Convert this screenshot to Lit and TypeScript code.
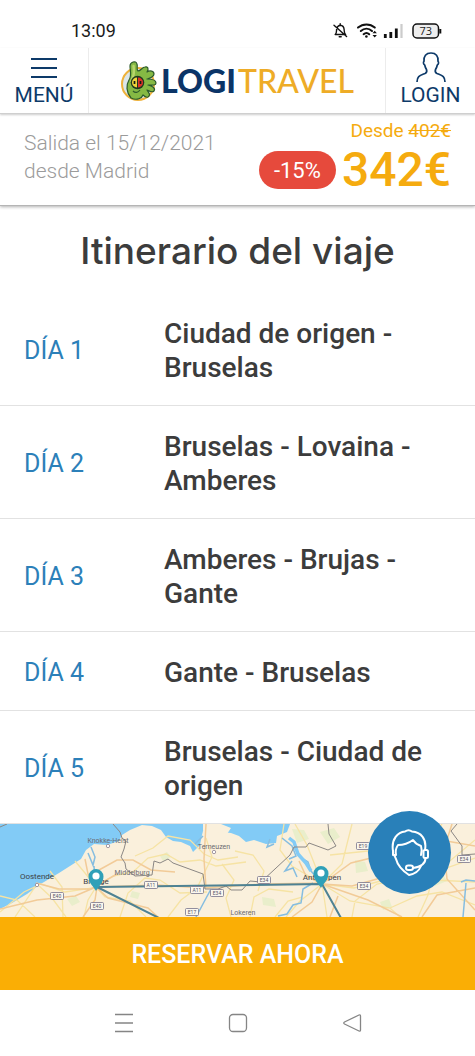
import { LitElement, html, css, svg } from "lit";
import { customElement, property } from "lit/decorators.js";

@customElement("status-bar")
class StatusBar extends LitElement {
  static styles = css`
    :host { display: flex; align-items: center; justify-content: space-between; height: 48px; padding: 13px 33px 0 71px; box-sizing: border-box; color: #1b1b1b; }
    .clock { font: 400 18px/22px Roboto, sans-serif; }
    svg { display: block; }
    .level { font: 400 11px "Open Sans", sans-serif; }
  `;
  render() {
    return html`
      <span class="clock">13:09</span>
      <svg width="110" height="20" viewBox="0 0 110 20" fill="none" stroke="#111" aria-label="Estado del dispositivo">
        <g stroke-width="1.4" stroke-linecap="round" stroke-linejoin="round">
          <path d="M3.200 13.500h10.400M3.200 13.500c1.600-1.400 1.200-3 1.400-5.200C5 6 6.200 4.600 8.200 4.300c2.400.2 3.700 1.900 3.900 4.100.2 2-.1 3.600 1.500 5.100M7.200 15.800h2M8.200 2.700v1.400M2 4.200l12.600 11.400" />
        </g>
        <g stroke-width="2" stroke-linecap="round">
          <path d="M26 6.600c5-4.300 12-4.300 16.800 0M28.800 10c3.400-3 8-3 11.200 0M31.600 13.200c1.700-1.500 4-1.500 5.600 0" />
        </g>
        <circle cx="34.400" cy="15.500" r="1.300" fill="#111" stroke="none" />
        <path d="M40.500 12.200l2.200-2.400 2.200 2.400zM40.500 14l2.200 2.400L44.900 14z" fill="#111" stroke="none" />
        <g stroke-width="2.800">
          <path d="M53.300 13v4M58.800 11v6M64.300 7.500v9.500" />
          <path d="M69.500 3v14" stroke="#ccc" stroke-width="2.200" />
        </g>
        <rect x="81" y="3" width="25.500" height="14" rx="4" fill="#eee" stroke-width="1.500" />
        <path d="M108.300 8v4.500" stroke-width="2" />
        <text class="level" x="93.700" y="14" text-anchor="middle" fill="#222" stroke="none">73</text>
      </svg>
    `;
  }
}

@customElement("site-header")
class SiteHeader extends LitElement {
  static styles = css`
    :host { display: grid; grid-template-columns: 89px 1fr 90px; height: 65px; position: relative; z-index: 2; background: #fff; border-bottom: 1px solid #cfcfcf; box-shadow: 0 1px 2px rgba(0, 0, 0, 0.2); color: #0d3a69; }
    .action { display: flex; flex-direction: column; align-items: center; justify-content: flex-end; gap: 4px; padding: 0 0 6px; margin: 0; border: 0 solid #ececec; background: none; color: inherit; font: 400 21px/24px Roboto, sans-serif; cursor: pointer; }
    .menu { border-right-width: 1px; }
    .login { border-left-width: 1px; gap: 0; }
    .brand { display: flex; align-items: center; justify-content: center; gap: 4px; text-decoration: none; padding-top: 1px; }
    .words { display: flex; gap: 2px; white-space: nowrap; }
    .logi { font: 900 32px/40px Lato, sans-serif; color: #0b3467; }
    .travel { font: 500 32px/40px Lato, sans-serif; color: #eeac27; }
    svg { display: block; flex: none; }
  `;
  render() {
    return html`
      <button class="action menu" type="button">
        <svg width="26" height="22" viewBox="0 0 26 22" stroke="#0d3a69" stroke-width="2"><path d="M0 2h26M0 11h26M0 20h26" /></svg>
        MENÚ
      </button>
      <a class="brand" href="#" aria-label="Logitravel">
        <svg width="37" height="42" viewBox="0 0 37 42">
          <circle cx="18" cy="24" r="16" fill="#dce6e8" stroke="#eeb23c" stroke-width="2" />
          <path d="M11 38C6 32 6 25 9 20C12 16 10 10 10 6C10 2 16 0 17 4C18 7 16 9 18 11C21 11 22 7 25 7C28 6 29 9 27 12C30 10 34 11 34 14C34 17 30 18 27 19C31 19 36 20 36 23C36 26 31 25 28 25C32 26 36 28 34 31C32 33 29 31 27 30C29 33 31 35 28 37C26 38 24 36 23 35C22 38 17 41 11 38z" fill="#85b944" stroke="#2c5a2b" stroke-width="1.200" stroke-linejoin="round" />
          <path d="M13.500 6c1 6 0 11-2 15" stroke="#b7d66b" stroke-width="2.500" fill="none" stroke-linecap="round" />
          <circle cx="17.500" cy="22.500" r="6.800" fill="#20391f" />
          <path d="M17 17.500a5 5 0 0 0 0 10z" fill="#f1d33a" />
          <path d="M18 17.500a5 5 0 0 1 0 10z" fill="#dd3429" />
          <path d="M14.500 21v3M20.500 21v3" stroke="#161c14" stroke-width="1.700" />
          <path d="M13 31c2 2 5 2 7-1" stroke="#2c5a2b" stroke-width="1.200" fill="none" />
        </svg>
        <span class="words"><span class="logi">LOGI</span><span class="travel">TRAVEL</span></span>
      </a>
      <button class="action login" type="button">
        <svg width="30" height="31" viewBox="0 0 30 31" fill="none" stroke="#0d3a69" stroke-width="1.700" stroke-linejoin="round">
          <path d="M1 30c0-6 3-6.500 8-8.500 2-.9 2-2.500 1.500-4C9.300 15.500 9 14.500 8.700 13c-1.400-.6-1.600-3-.7-3.600C7.500 4 10 1 15 1s7.500 3 7 8.400c.9.6.7 3-.7 3.600-.3 1.500-.6 2.500-1.800 4.500-.5 1.500-.5 3.100 1.500 4 5 2 8 2.500 8 8.500" />
        </svg>
        LOGIN
      </button>
    `;
  }
}

@customElement("price-bar")
class PriceBar extends LitElement {
  static styles = css`
    :host { display: flex; justify-content: space-between; position: relative; z-index: 1; height: 91px; box-sizing: content-box; padding: 0 24px; background: #fff; border-bottom: 1px solid #b5b5b5; box-shadow: 0 1px 3px rgba(0, 0, 0, 0.3); font-family: Roboto, sans-serif; }
    .trip { margin: 0; padding-top: 15px; font-size: 21px; line-height: 28px; font-weight: 300; color: #9b9b9b; }
    .price { display: flex; flex-direction: column; align-items: flex-end; padding-top: 6px; color: #f5ab0f; }
    .before { font-size: 19px; line-height: 22px; }
    .now { display: flex; align-items: center; gap: 6px; }
    .off { display: grid; place-items: center; width: 77px; height: 38px; border-radius: 19px; background: #e64a3c; color: #fff; font-size: 22px; }
    .amount { font-size: 48px; line-height: 56px; font-weight: 500; }
  `;
  render() {
    return html`
      <p class="trip">Salida el 15/12/2021<br />desde Madrid</p>
      <div class="price">
        <span class="before">Desde <s>402€</s></span>
        <span class="now"><span class="off">-15%</span><strong class="amount">342€</strong></span>
      </div>
    `;
  }
}

@customElement("day-list")
class DayList extends LitElement {
  @property({ attribute: false }) days: string[] = [];
  static styles = css`
    :host { display: block; font-family: Roboto, sans-serif; }
    .title { margin: 0; padding: 23px 16px 20px; text-align: center; font: 500 37px/44px Inter, sans-serif; color: #3c3c3c; }
    .days { margin: 0; padding: 0; list-style: none; }
    .row { display: grid; grid-template-columns: 140px 1fr; align-items: center; padding: 24px 24px 20px; border-bottom: 1px solid #e2e2e2; }
    .day { font-size: 25px; line-height: 34px; color: #2c80b9; }
    .route { font-size: 28px; line-height: 34px; font-weight: 500; color: #3c3c3c; }
  `;
  render() {
    return html`
      <h2 class="title">Itinerario del viaje</h2>
      <ol class="days">
        ${this.days.map((route, i) => html`<li class="row"><span class="day">DÍA ${i + 1}</span><span class="route">${route}</span></li>`)}
      </ol>
    `;
  }
}

const shields: [string, number, number][] = [
  ["A11", 151, 61], ["A11", 197, 66], ["E34", 217, 69], ["E40", 57, 72], ["E40", 97, 82],
  ["E34", 264, 56], ["E19", 363, 22], ["E34", 364, 62], ["E34", 464, 35], ["E17", 192, 88],
];
const towns: [string, number, number, string][] = [
  ["Oostende", 37, 55, "city"], ["Brugge", 96, 60, "city"], ["Antwerpen", 322, 56, "city"],
  ["Knokke-Heist", 108, 19, "town"], ["Middelburg", 132, 51, "town"], ["Terneuzen", 214, 25, "town"], ["Lokeren", 243, 91, "town"],
];

@customElement("route-map")
class RouteMap extends LitElement {
  static styles = css`
    :host { display: block; position: relative; }
    .map { display: block; width: 100%; height: 93px; }
    .city { font: 400 8px Roboto, sans-serif; fill: #3d4145; }
    .town { font: 400 7px Roboto, sans-serif; fill: #6a6a70; }
    .shield { font: 400 5px Roboto, sans-serif; fill: #58586a; }
    .help { position: absolute; top: -13px; right: 24px; width: 83px; height: 83px; padding: 0; border: 0; border-radius: 50%; background: #2980b9; display: grid; place-items: center; cursor: pointer; }
  `;
  private pin(x: number, y: number) {
    return svg`<path d="M${x} ${y + 15}c-2-4-7.500-8-7.500-14.500a7.500 7.500 0 0 1 15 0c0 6.500-5.500 10.500-7.500 14.500z" fill="#2fa0b8" /><circle cx=${x} cy=${y} r="3.600" fill="#fff" />`;
  }
  render() {
    return html`
      <svg class="map" viewBox="0 0 475 93" preserveAspectRatio="xMidYMid slice" role="img" aria-label="Mapa del itinerario">
        <rect width="475" height="93" fill="#faf0dc" />
        <path d="M0 0h290l-3 8-10 4-1 7-10 1-12-4-8 2-7-6-8-3-10-1-12 0-5-5-2 8-2 10-7 7-3-6-9-4-8-1-7-4-5-7-9-4-10-1-12 5-8 5-3 6-12 4-13-1-8 6-5 9-22 14-20 12-12 9-15 9-12 6z" fill="#82cbf6" />
        <path d="M203 0h18l10 4-4 6-12-2-7 3-5-5z" fill="#faf0dc" />
        <g fill="#e9eecb">
          <path d="M160 32l7-4 4 5-8 4zM292 5l12 1 5 9-12 4zM320 8l14-4 6 9-12 7zM355 36l10 2 3 9-12 2zM262 73l12 2 2 8-13-2zM67 75l9-3 4 6-8 4zM430 52l12-3 5 8-12 5zM380 78l9-3 3 8-9 3zM132 67l8 2-2 6-8-2z" />
        </g>
        <g fill="none" stroke="#f6e3a4" stroke-width="1.300">
          <path d="M0 88l24-20 17-8 24 8 28-4 20-12 20-4 15-14 18-4 14 8 20-2 16 6 30-4M50 47l12 16 1 30M15 93l22-33 15 14 14 19M75 37l10 12 11 14-8 13-4 17M96 63l9 10 25 4 16 16M120 93l8-24 17-15 15 2 20 13 27-1M135 32l18-8 15-12 22 4 14 14 14 6 20-3M222 40l12 16-8 18 5 19M250 93l4-20 15-8 24 3M295 0l12 21 15 38 5 34M322 60l-30-18-12-16 4-26M322 60l20-20 10-40M322 60l32 4 38-10 83 4M322 60l28 17 40 7 10 9M322 60l-22 17-14 16M352 93l3-16 22-17 25-5 20-27 20-28M330 31l38-4 30 16 28 8 49-17M390 84l27-12 25-4 33 13M418 93l10-22 5-20 42-35M0 72l17 4 18 17M168 93l13-17 16-12 15-31-6-19M235 27l18 4 11 16-6 20M275 93l13-16 14-4" />
        </g>
        <g fill="none" stroke="#f2cb98" stroke-width="1.500">
          <path d="M36 59l23 6 32 0 26-15M0 85l37-9 38-4 21-9 12 11 40 10 10 9M85 35l3 15 9 13-2 13-12 17M99 46l18-10 16 0 18 10 24 2M97 63l60-2 46 3 61-4 58-1M206 64l-2-29 2-35M322 60l29-21 28-7 27-24 8-8M322 60l-16-8-7-15M322 60l46 16 34 17M322 60l-10 18-20 15M322 60l30 2 25-7 30-23M338 72l-8 21M452 0l-8 25 3 30 28 31M422 93l15-22 38-7M435 15l40 7" />
        </g>
        <g fill="none" stroke="#85bde0" stroke-width="1.500">
          <path d="M91 23l4 10-2 8-5-12M94 42l1 14M211 65l-7 13-8 15M195 20l8-8M313 59l-10 6-2 14-8 2-6 9-9 2M282 14l10 8 4 10-7 3M294 23l5 9 9 6 3 9 8 9M292 37l-7 10 8-3 4 9M270 15l-3 8 7-3M461 58l5-2 9 1M466 59l-3 34" />
        </g>
        <path d="M289 14l5 4 4 12 8 9 5 8" fill="none" stroke="#82cbf6" stroke-width="3.500" />
        <g fill="none" stroke="#8b8784" stroke-width="1">
          <path d="M113 0l7 8 2 6 4 3-2 8-3 8 4 6 1 6 9 7 17-1 2-14 6 2 8-4 5 4 30 11 2 15 13 0 8-3 5 4 11 0 8-9 11 1 29-27 4-8 12 0 3-4 19 7 8-4-7-12-1-10M457 0l-6 7 11 15v9l13-1M0 3l7-3" />
        </g>
        <g fill="none" stroke="#4e8293" stroke-width="2">
          <path d="M97 63l225-3M97 63l62 31M322 60l19 34" />
        </g>
        <g fill="#fff" stroke="#8c8291" stroke-width=".8">
          <circle cx="37" cy="61" r="1.700" /><circle cx="108" cy="22" r="1.700" /><circle cx="214" cy="28" r="1.700" />
        </g>
        ${shields.map(([t, x, y]) => svg`<rect x=${x - 6.5} y=${y - 3.5} width="13" height="7" rx="1" fill="#fbf7ee" stroke="#77738c" stroke-width=".8" /><text class="shield" x=${x} y=${y + 2} text-anchor="middle">${t}</text>`)}
        ${towns.map(([t, x, y, c]) => svg`<text class=${c} x=${x} y=${y} text-anchor="middle">${t}</text>`)}
        ${this.pin(96, 52)} ${this.pin(321, 49)}
      </svg>
      <button class="help" type="button" aria-label="Atención al cliente">
        <svg width="40" height="48" viewBox="0 0 40 48" fill="none" stroke="#fff" stroke-width="2" stroke-linejoin="round" stroke-linecap="round">
          <path d="M3 22C1 10 8 3 15 2.500c2-1.500 5-1.500 7 0C31 3 37 10 35 21" />
          <path d="M3 22v4h3c-1-4 0-7 2-10 6 0 11-2 15-5 2 3 5 5 8 6 1 3 1 6 0 9" />
          <path d="M4 26c1 1 1 2 2 4 2 8 7 12 13 16 6-1 10-4 12-9" />
          <rect x="33.500" y="21" width="4.500" height="8" rx="1.500" />
          <path d="M35.500 29c0 6-5 9-12.500 10" />
          <rect x="16" y="36.500" width="7" height="4.500" rx="2.200" />
        </svg>
      </button>
    `;
  }
}

@customElement("app-root")
class AppRoot extends LitElement {
  static styles = css`
    :host { display: flex; flex-direction: column; min-height: 100vh; background: #fff; font-family: Roboto, sans-serif; }
    .book { width: 100%; height: 73px; border: 0; padding: 2px 0 0; background: #faae05; color: #fff; font: 500 25px/32px Roboto, sans-serif; cursor: pointer; position: relative; }
    .system { display: grid; grid-template-columns: repeat(3, 114px); justify-content: center; height: 66px; align-items: center; }
    .key { display: grid; place-items: center; height: 48px; padding: 0; border: 0; background: none; }
  `;
  private days = [
    "Ciudad de origen - Bruselas",
    "Bruselas - Lovaina - Amberes",
    "Amberes - Brujas - Gante",
    "Gante - Bruselas",
    "Bruselas - Ciudad de origen",
  ];
  private key(label: string, shape: unknown) {
    return html`<button class="key" type="button" aria-label=${label}>
      <svg width="20" height="20" viewBox="0 0 20 20" fill="none" stroke="#858585" stroke-width="1.300" stroke-linejoin="round">${shape}</svg>
    </button>`;
  }
  render() {
    return html`
      <status-bar></status-bar>
      <site-header></site-header>
      <price-bar></price-bar>
      <main>
        <day-list .days=${this.days}></day-list>
        <route-map></route-map>
      </main>
      <button class="book" type="button">RESERVAR AHORA</button>
      <nav class="system" aria-label="Sistema">
        ${this.key("Recientes", svg`<path d="M1 1.500h18M1 10h18M1 18.500h18" />`)}
        ${this.key("Inicio", svg`<rect x="1.500" y="1.500" width="17" height="17" rx="3.500" />`)}
        ${this.key("Atrás", svg`<path d="M17 2q1.500-.5 1.500 1v14q0 1.500-1.500 1L2.500 11q-1.500-1 0-2z" />`)}
      </nav>
    `;
  }
}
